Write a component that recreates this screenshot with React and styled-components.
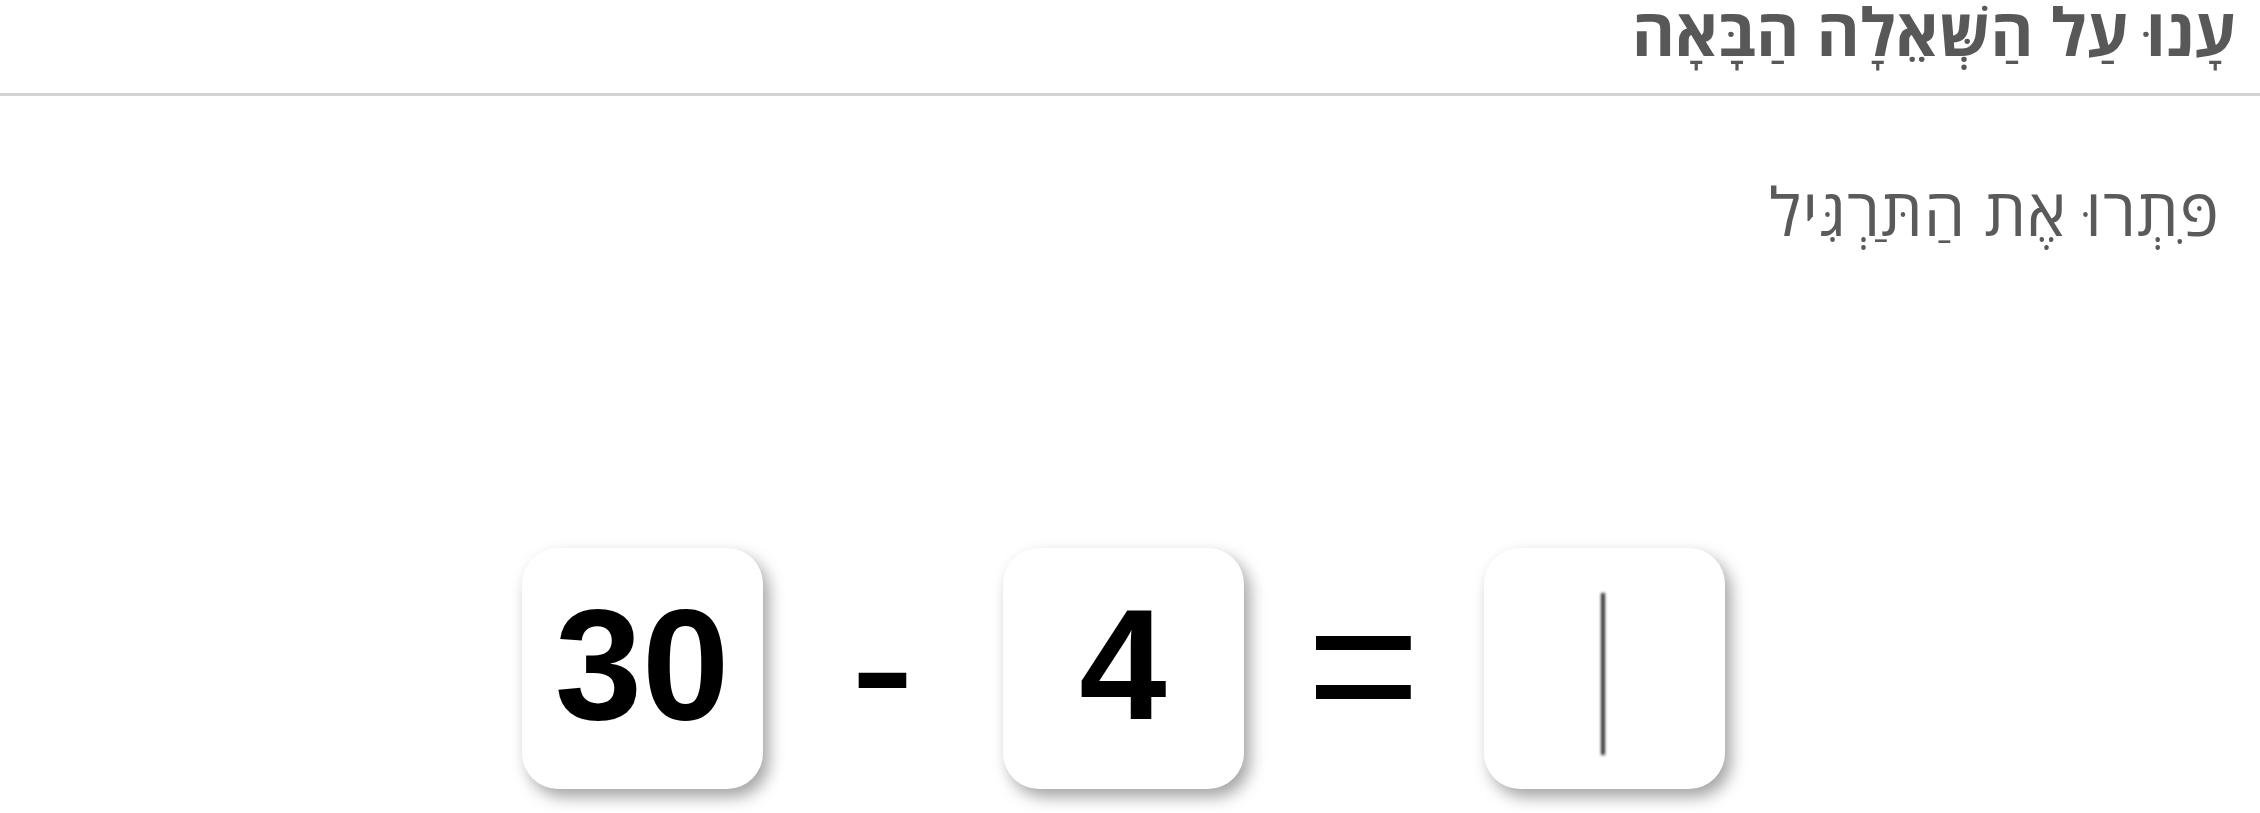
import styled, { createGlobalStyle } from 'styled-components'

const GlobalStyle = createGlobalStyle`
    html, body {
        margin: 0;
        padding: 0;
        background: #ffffff;
    }
    body {
        font-family: "Open Sans", sans-serif;
    }
`

const Page = styled.div`
        width: 100%;
        min-height: 813px;
        display: flex;
        flex-direction: column;
        direction: rtl;
`

const Header = styled.header`
        height: 93px;
        display: flex;
        align-items: flex-start;
        padding: 0 24px;
        border-bottom: 3px solid #d3d3d3;
`

const Title = styled.h1`
        margin: -10px 0 0;
        font-size: 66px;
        line-height: 80px;
        font-weight: 700;
        color: #585858;
`

const Instructions = styled.p`
        margin: 0;
        padding: 74px 40px 0;
        font-size: 66px;
        line-height: 80px;
        letter-spacing: 1px;
        font-weight: 400;
        color: #5a5a5a;
`

const Exercise = styled.div`
        direction: ltr;
        display: flex;
        flex-direction: row;
        justify-content: center;
        align-items: center;
        margin-top: 298px;
        padding-right: 14px;
`

const Card = styled.div`
        width: 241px;
        height: 241px;
        border-radius: 36px;
        background: #ffffff;
        box-shadow: 6px 8px 16px rgba(0, 0, 0, 0.36);
        display: flex;
        align-items: center;
        justify-content: center;
        font-family: "Liberation Sans", Arial, sans-serif;
        font-weight: 700;
        font-size: 157px;
        color: #000000;
`

const Value = styled.span`
        line-height: 1;
        transform: translateY(-4px);
`

const Operator = styled.div`
        width: 240px;
        height: 241px;
        display: flex;
        align-items: center;
        justify-content: center;
        font-family: "Liberation Sans", Arial, sans-serif;
        font-weight: 400;
        font-size: 195px;
        line-height: 1;
        color: #000000;
        transform: translateY(${props => props.$shift || 0}px);
`

const Caret = styled.div`
        width: 4px;
        height: 162px;
        background: #333333;
        filter: blur(1.4px);
        transform: translate(-1px, 5px);
`

const exercise = {
    first: 30,
    operator: '-',
    second: 4
}

function App() {
    return (
        <>
            <GlobalStyle />
            <Page>
                <Header>
                    <Title>עָנוּ עַל הַשְּׁאֵלָה הַבָּאָה</Title>
                </Header>
                <Instructions>פִּתְרוּ אֶת הַתַּרְגִּיל</Instructions>

                <Exercise>
                    <Card><Value>{exercise.first}</Value></Card>
                    <Operator $shift={-4}>{exercise.operator}</Operator>
                    <Card><Value>{exercise.second}</Value></Card>
                    <Operator $shift={-4}>=</Operator>
                    <Card>
                        <Caret />
                    </Card>
                </Exercise>
            </Page>
        </>
    )
}

export default App
